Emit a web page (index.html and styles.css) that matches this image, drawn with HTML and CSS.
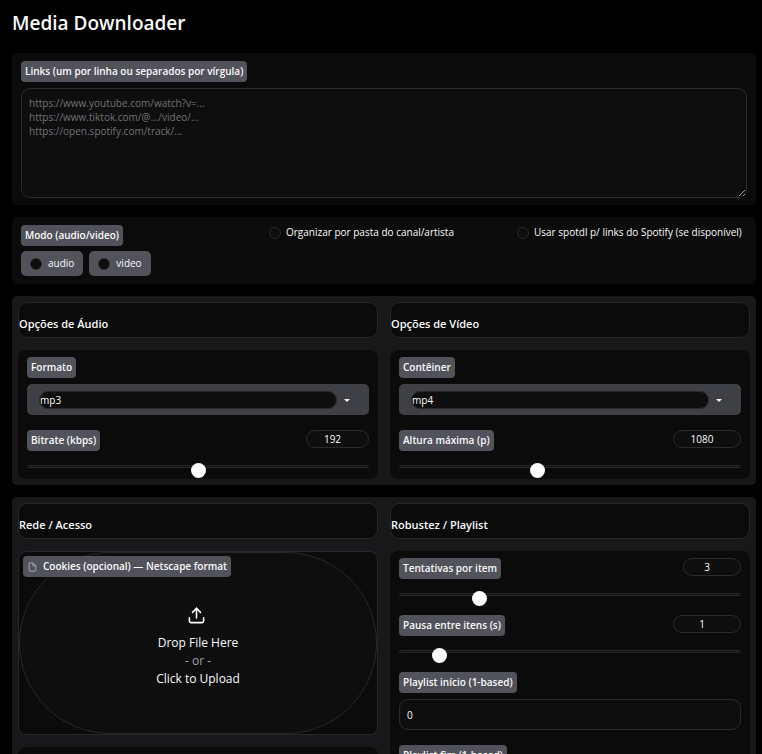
FILE: index.html
```html
<!DOCTYPE html>
<html lang="pt-BR">
<head>
<meta charset="utf-8">
<meta name="viewport" content="width=device-width, initial-scale=1">
<title>Media Downloader</title>
<link rel="stylesheet" href="styles.css">
</head>
<body>
<main class="page">
  <h1 class="title">Media Downloader</h1>

  <section class="panel links">
    <label class="tag" for="links">Links (um por linha ou separados por vírgula)</label>
    <textarea id="links" class="field links-input" placeholder="https://www.youtube.com/watch?v=...
https://www.tiktok.com/@.../video/...
https://open.spotify.com/track/..."></textarea>
  </section>

  <section class="panel modes">
    <fieldset class="mode">
      <legend class="tag">Modo (audio/video)</legend>
      <div class="chips">
        <label class="chip"><input class="dot" type="radio" name="mode" value="audio">audio</label>
        <label class="chip"><input class="dot" type="radio" name="mode" value="video">video</label>
      </div>
    </fieldset>
    <label class="check"><input class="dot" type="checkbox">Organizar por pasta do canal/artista</label>
    <label class="check"><input class="dot" type="checkbox">Usar spotdl p/ links do Spotify (se disponível)</label>
  </section>

  <section class="group">
    <div class="column">
      <h2 class="heading">Opções de Áudio</h2>
      <div class="card">
        <label class="tag" for="format">Formato</label>
        <div class="dropdown">
          <select id="format"><option>mp3</option><option>m4a</option></select>
          <svg class="caret" viewBox="0 0 18 18" aria-hidden="true"><path d="M6 8l3 3 3-3z"/></svg>
        </div>
        <div class="slider-head spaced">
          <label class="tag" for="bitrate">Bitrate (kbps)</label>
          <input class="number" type="number" value="192" aria-label="Bitrate">
        </div>
        <input id="bitrate" class="slider" type="range" min="64" max="320" value="192">
      </div>
    </div>
    <div class="column">
      <h2 class="heading">Opções de Vídeo</h2>
      <div class="card">
        <label class="tag" for="container">Contêiner</label>
        <div class="dropdown">
          <select id="container"><option>mp4</option><option>mkv</option></select>
          <svg class="caret" viewBox="0 0 18 18" aria-hidden="true"><path d="M6 8l3 3 3-3z"/></svg>
        </div>
        <div class="slider-head spaced">
          <label class="tag" for="height">Altura máxima (p)</label>
          <input class="number wide" type="number" value="1080" aria-label="Altura máxima">
        </div>
        <input id="height" class="slider" type="range" min="360" max="2160" value="1080">
      </div>
    </div>
  </section>

  <section class="group">
    <div class="column">
      <h2 class="heading">Rede / Acesso</h2>
      <div class="upload">
        <span class="tag upload-tag" id="cookies-label">
          <svg class="file-icon" viewBox="0 0 24 24" aria-hidden="true"><path d="M13 2H6a2 2 0 0 0-2 2v16a2 2 0 0 0 2 2h12a2 2 0 0 0 2-2V9z"/><path d="M13 2v7h7"/></svg>
          Cookies (opcional) — Netscape format
        </span>
        <button class="dropzone" type="button" aria-describedby="cookies-label">
          <svg class="upload-icon" viewBox="0 0 24 24" aria-hidden="true"><path d="M21 15v4a2 2 0 0 1-2 2H5a2 2 0 0 1-2-2v-4"/><path d="M17 8l-5-5-5 5"/><path d="M12 3v12"/></svg>
          <span>Drop File Here</span>
          <span class="or">- or -</span>
          <span>Click to Upload</span>
        </button>
      </div>
      <div class="card">
        <label class="tag" for="proxy">Proxy</label>
        <input id="proxy" class="field text" type="text">
      </div>
    </div>
    <div class="column">
      <h2 class="heading">Robustez / Playlist</h2>
      <div class="card">
        <div class="slider-head">
          <label class="tag" for="retries">Tentativas por item</label>
          <input class="number narrow" type="number" value="3" aria-label="Tentativas">
        </div>
        <input id="retries" class="slider" type="range" min="1" max="10" value="3">
        <div class="slider-head next">
          <label class="tag" for="pause">Pausa entre itens (s)</label>
          <input class="number wide" type="number" value="1" aria-label="Pausa">
        </div>
        <input id="pause" class="slider" type="range" min="0" max="10" value="1">
        <div class="next">
          <label class="tag" for="start">Playlist início (1-based)</label>
          <input id="start" class="field text" type="text" inputmode="numeric" value="0">
        </div>
        <div class="spaced">
          <label class="tag" for="end">Playlist fim (1-based)</label>
          <input id="end" class="field text" type="text" inputmode="numeric" value="0">
        </div>
      </div>
    </div>
  </section>
</main>
</body>
</html>
```
FILE: styles.css
```css
* {
  box-sizing: border-box;
}

html {
  background: #000;
  scrollbar-width: none;
}

body {
  margin: 0;
  color: #fafafa;
  font: 10px/15px "Open Sans", "Noto Sans", sans-serif;
}

input,
select,
textarea,
button {
  margin: 0;
  color: inherit;
  font: inherit;
}

.page {
  display: flex;
  flex-direction: column;
  gap: 12px;
  padding: 9px 6px 12px 12px;
}

.title {
  margin: 0 0 4px;
  font-size: 19px;
  line-height: 28px;
  font-weight: 600;
}

.panel {
  background: #0b0b0b;
  border-radius: 5px;
}

.links {
  padding: 8px 9px 7px;
}

.tag {
  display: block;
  width: fit-content;
  padding: 3px 4px;
  background: #52525b;
  border-radius: 4px;
  font-weight: 600;
  white-space: nowrap;
}

.field {
  display: block;
  width: 100%;
  margin-top: 6px;
  background: #0e0e0e;
  border: 1px solid #2a2a2a;
  border-radius: 9px;
}

.links-input {
  height: 110px;
  padding: 7px;
  line-height: 14px;
  resize: vertical;
}

.links-input::placeholder {
  color: #717178;
}

.text {
  height: 31px;
  padding: 0 7px;
}

.modes {
  display: grid;
  grid-template-columns: repeat(3, minmax(0, 1fr));
  align-items: start;
}

.mode {
  min-width: 0;
  margin: 0;
  padding: 8px 9px;
  border: 0;
}

.mode .tag {
  float: left;
}

.chips {
  display: flex;
  clear: both;
  gap: 6px;
  padding-top: 5px;
}

.chip,
.check {
  display: flex;
  align-items: center;
  white-space: nowrap;
}

.chip {
  gap: 6px;
  height: 25px;
  padding: 0 9px;
  background: #52525b;
  border-radius: 5px;
}

.check {
  gap: 5px;
  padding: 8px 0 0 9px;
}

.dot {
  flex: none;
  width: 12px;
  height: 12px;
  appearance: none;
  background: #0e0e0e;
  border: 1px solid #2a2a2a;
  border-radius: 50%;
}

.dot:checked {
  background: #f4f4f5;
}

.group {
  display: grid;
  grid-template-columns: repeat(2, minmax(0, 1fr));
  gap: 12px;
  padding: 6px;
  background: #18181b;
  border-radius: 5px;
}

.column {
  display: flex;
  flex-direction: column;
  gap: 12px;
}

.heading {
  margin: 0;
  padding: 12px 0 5px;
  background: #0b0b0b;
  border: 1px solid #27272a;
  border-radius: 9px;
  font-size: 11px;
  line-height: 17px;
  font-weight: 600;
}

.card {
  padding: 7px 9px 8px;
  background: #0b0b0b;
  border-radius: 8px;
}

.dropdown {
  display: flex;
  align-items: center;
  gap: 1px;
  height: 31px;
  margin-top: 6px;
  padding: 0 13px 0 12px;
  background: #3f3f46;
  border-radius: 5px;
}

.dropdown select {
  flex: 1;
  height: 18px;
  padding: 0;
  appearance: none;
  background: #0e0e0e;
  border: 1px solid #2a2a2a;
  border-radius: 9px;
  line-height: 16px;
}

.caret {
  width: 18px;
  height: 18px;
  fill: #f4f4f5;
}

.slider-head {
  display: flex;
  align-items: flex-start;
  justify-content: space-between;
}

.spaced {
  margin-top: 15px;
}

.next {
  margin-top: 19px;
}

.number {
  width: 63px;
  height: 18px;
  padding: 0 10px 0 0;
  appearance: textfield;
  background: #0e0e0e;
  border: 1px solid #2a2a2a;
  border-radius: 9px;
  text-align: center;
}

.number::-webkit-inner-spin-button {
  display: none;
}

.wide {
  width: 68px;
}

.narrow {
  width: 58px;
}

.slider {
  display: block;
  width: 100%;
  height: 3px;
  margin: 14px 0 3px;
  appearance: none;
  background: #0e0e0e;
  border: 1px solid #2a2a2a;
  border-radius: 2px;
}

.slider::-webkit-slider-runnable-track {
  height: 1px;
  margin: 0 -1px;
}

.slider::-webkit-slider-thumb {
  width: 15px;
  height: 15px;
  margin-top: -3px;
  appearance: none;
  background: #fff;
  border-radius: 50%;
}

.upload {
  position: relative;
  background: #0b0b0b;
  border: 1px solid #27272a;
  border-radius: 8px;
}

.upload-tag {
  position: absolute;
  top: 4px;
  left: 4px;
  display: flex;
  align-items: center;
  gap: 5px;
}

.file-icon {
  width: 11px;
  height: 10px;
  fill: none;
  stroke: #b4b4bb;
  stroke-width: 2;
}

.dropzone {
  display: flex;
  flex-direction: column;
  align-items: center;
  justify-content: center;
  width: 100%;
  height: 182px;
  padding: 8px 0 0;
  background: #0e0e0e;
  border: 1px solid #27272a;
  border-radius: 91px;
  font-size: 12px;
  line-height: 18px;
}

.upload-icon {
  width: 19px;
  height: 19px;
  margin: 0 3px 9px 0;
  fill: none;
  stroke: #fff;
  stroke-width: 2;
  stroke-linecap: round;
  stroke-linejoin: round;
}

.or {
  color: #a1a1aa;
}
```
